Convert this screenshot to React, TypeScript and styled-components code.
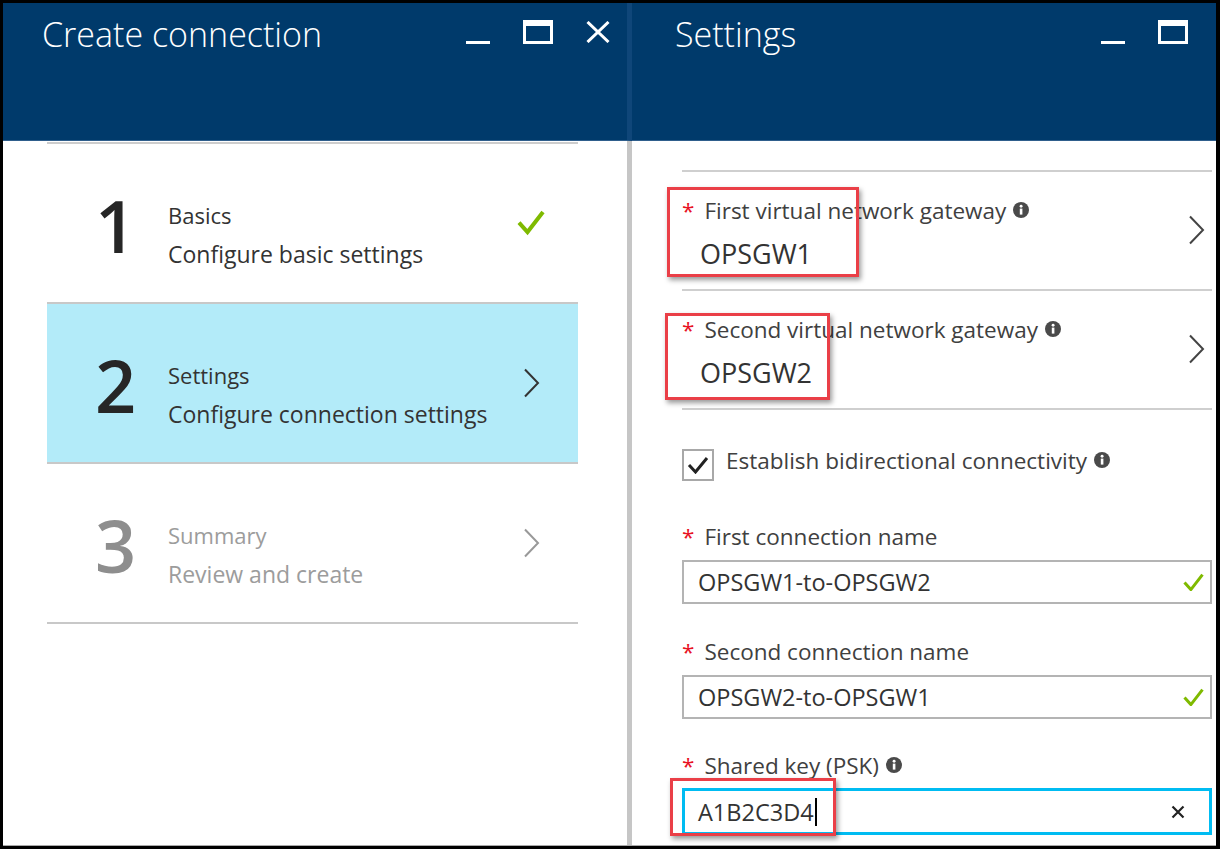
import React from "react";
import styled, { createGlobalStyle } from "styled-components";

const GlobalStyle = createGlobalStyle`
  html, body { margin: 0; padding: 0; background: #000; }
  body { font-family: "Open Sans", "Noto Sans", "Liberation Sans", sans-serif; }
  * { box-sizing: border-box; }
`;

const Frame = styled.div`
  width: 1220px;
  height: 849px;
  background: #000;
  padding: 3px 4px 3px 3px;
  display: flex;
`;

const Screen = styled.div`
  flex: 1;
  display: flex;
  background: #fff;
  border-bottom: 1px solid #a9a9a9;
  overflow: hidden;
`;

const Blade = styled.section<{ $width?: number }>`
  display: flex;
  flex-direction: column;
  ${(p) => (p.$width ? `width: ${p.$width}px; flex: none;` : "flex: 1; min-width: 0;")}
`;

const BladeHeader = styled.header<{ $divider?: boolean }>`
  height: 138px;
  flex: none;
  background: #003a6b;
  border-bottom: 1px solid #2f5e8c;
  border-right: ${(p) => (p.$divider ? "5px solid #0f4679" : "none")};
  display: flex;
  align-items: flex-start;
  color: #fff;
`;

const Title = styled.h1<{ $indent: number }>`
  margin: 10.5px 0 0 ${(p) => p.$indent}px;
  font-size: 34px;
  font-weight: 300;
  line-height: 40px;
  white-space: nowrap;
`;

const Controls = styled.div<{ $right: number }>`
  display: flex;
  align-items: flex-end;
  gap: 33px;
  height: 24px;
  margin: 17px ${(p) => p.$right}px 0 auto;
`;

const MinimizeButton = styled.span`
  width: 24px;
  height: 3px;
  background: #fff;
`;

const MaximizeButton = styled.span`
  width: 30px;
  height: 24px;
  border: 3px solid #fff;
  border-top-width: 6px;
`;

const CloseButton = styled.span`
  display: flex;
  align-self: center;
`;

const LeftBody = styled.div`
  flex: 1;
  border-right: 5px solid #c6c6c6;
  padding: 1px 49px 0 44px;
`;

const StepList = styled.div`
  border-top: 2px solid #cdcdcd;
`;

const StepRow = styled.div<{ $active?: boolean }>`
  height: 160px;
  display: flex;
  align-items: flex-start;
  padding-left: 48px;
  border-bottom: 2px solid #c8c8c8;
  background: ${(p) => (p.$active ? "#b3ebf9" : "transparent")};
`;

const StepNumber = styled.div<{ $muted?: boolean }>`
  width: 73px;
  flex: none;
  margin-top: 45px;
  font-size: 72px;
  font-weight: 600;
  line-height: 72px;
  color: ${(p) => (p.$muted ? "#8e8e8e" : "#262626")};
`;

const StepText = styled.div<{ $muted?: boolean }>`
  flex: 1;
  padding-top: 56px;
  color: ${(p) => (p.$muted ? "#9c9c9c" : "#333")};
`;

const StepTitle = styled.div`
  font-size: 22px;
  line-height: 30px;
`;

const StepSubtitle = styled.div`
  margin-top: 9px;
  font-size: 23px;
  line-height: 30px;
`;

const StepIcon = styled.div`
  width: 28px;
  flex: none;
  align-self: center;
  margin-right: 33px;
  display: flex;
  justify-content: center;
`;

const RightBody = styled.div`
  flex: 1;
  padding: 29px 4px 0 50px;
`;

const PickerList = styled.div`
  border-top: 2px solid #cfcfcf;
`;

const PickerRow = styled.div`
  position: relative;
  display: flex;
  align-items: center;
  padding: 24px 0 18px;
  border-bottom: 2px solid #cfcfcf;
`;

const PickerBody = styled.div`
  flex: 1;
`;

const FieldLabel = styled.div`
  display: flex;
  align-items: flex-start;
  font-size: 22.5px;
  line-height: 30px;
  color: #404040;
  white-space: nowrap;
`;

const Required = styled.span`
  color: #e81123;
  margin-right: 10px;
`;

const InfoIcon = styled.span`
  display: flex;
  margin: 6px 0 0 7px;
`;

const PickerValue = styled.div`
  margin-top: 11px;
  padding-left: 18px;
  font-size: 27px;
  line-height: 34px;
  color: #333;
`;

const PickerChevron = styled.span`
  display: flex;
  margin: -8px 7px 0 0;
`;

const CheckRow = styled.label`
  display: flex;
  align-items: flex-start;
  margin-top: 36px;
  font-size: 22.5px;
  line-height: 30px;
  color: #404040;
`;

const CheckBox = styled.span`
  width: 32px;
  height: 32px;
  flex: none;
  margin: 3px 12px 0 0;
  border: 2px solid #a8a8a8;
  display: flex;
  align-items: center;
  justify-content: center;
`;

const FieldGroup = styled.div<{ $gap: number }>`
  margin-top: ${(p) => p.$gap}px;
`;

const InputBox = styled.div<{ $focused?: boolean; $gap: number }>`
  position: relative;
  margin-top: ${(p) => p.$gap}px;
  height: ${(p) => (p.$focused ? 47 : 44)}px;
  border: ${(p) => (p.$focused ? "3px solid #00bcf2" : "2px solid #b4b4b4")};
  display: flex;
  align-items: center;
  padding: 0 6px 0 ${(p) => (p.$focused ? 13 : 14)}px;
  font-size: 23.5px;
  line-height: 40px;
  color: #333;
`;

const InputValue = styled.span`
  flex: 1;
  display: flex;
  align-items: center;
`;

const Caret = styled.span`
  width: 2px;
  height: 28px;
  background: #000;
  margin-left: 1px;
`;

const ClearButton = styled.span`
  display: flex;
  margin-right: 18px;
`;

const Annotation = styled.span<{ $top: number; $left: number; $w: number; $h: number }>`
  position: absolute;
  top: ${(p) => p.$top}px;
  left: ${(p) => p.$left}px;
  width: ${(p) => p.$w}px;
  height: ${(p) => p.$h}px;
  border: 3px solid #ea3f47;
  box-shadow: 2px 3px 5px rgba(0, 0, 0, 0.4);
  pointer-events: none;
`;

const CloseIcon = () => (
  <svg width="24" height="22" viewBox="0 0 24 22">
    <path d="M1.5 1 L22.5 21 M22.5 1 L1.5 21" stroke="#fff" strokeWidth="3" fill="none" />
  </svg>
);

const Chevron = ({ color = "#333" }: { color?: string }) => (
  <svg width="17" height="30" viewBox="0 0 17 30">
    <polyline points="2,1.5 15,15 2,28.5" stroke={color} strokeWidth="2" fill="none" />
  </svg>
);

const GreenCheck = ({ size = 28 }: { size?: number }) => (
  <svg width={size} height={size * 0.9} viewBox="0 0 28 25">
    <polyline points="2,12.5 10.5,22 26,2" stroke="#7fba00" strokeWidth="4" fill="none" />
  </svg>
);

const Info = () => (
  <svg width="16" height="16" viewBox="0 0 16 16">
    <circle cx="8" cy="8" r="8" fill="#4a4a4a" />
    <rect x="6.8" y="6.6" width="2.6" height="6" fill="#fff" />
    <circle cx="8.1" cy="4.2" r="1.45" fill="#fff" />
  </svg>
);

const BoxCheck = () => (
  <svg width="22" height="18" viewBox="0 0 22 18">
    <polyline points="2,9 8.5,16 20,2" stroke="#222" strokeWidth="3" fill="none" />
  </svg>
);

const ClearIcon = () => (
  <svg width="14" height="14" viewBox="0 0 14 14">
    <path d="M1.5 1.5 L12.5 12.5 M12.5 1.5 L1.5 12.5" stroke="#222" strokeWidth="2.2" fill="none" />
  </svg>
);

type Step = { n: string; title: string; sub: string; state: "done" | "active" | "todo" };

const steps: Step[] = [
  { n: "1", title: "Basics", sub: "Configure basic settings", state: "done" },
  { n: "2", title: "Settings", sub: "Configure connection settings", state: "active" },
  { n: "3", title: "Summary", sub: "Review and create", state: "todo" },
];

const pickers = [
  { label: "First virtual network gateway", value: "OPSGW1", box: { top: 14.7, left: -15.3, w: 192, h: 90.3 } },
  { label: "Second virtual network gateway", value: "OPSGW2", box: { top: 22, left: -17, w: 165, h: 87 } },
];

export default function App() {
  return (
    <>
      <GlobalStyle />
      <Frame>
        <Screen>
          <Blade $width={629}>
            <BladeHeader $divider>
              <Title $indent={39}>Create connection</Title>
              <Controls $right={17}>
                <MinimizeButton />
                <MaximizeButton />
                <CloseButton>
                  <CloseIcon />
                </CloseButton>
              </Controls>
            </BladeHeader>
            <LeftBody>
              <StepList>
                {steps.map((s) => (
                  <StepRow key={s.n} $active={s.state === "active"}>
                    <StepNumber $muted={s.state === "todo"}>{s.n}</StepNumber>
                    <StepText $muted={s.state === "todo"}>
                      <StepTitle>{s.title}</StepTitle>
                      <StepSubtitle>{s.sub}</StepSubtitle>
                    </StepText>
                    <StepIcon>
                      {s.state === "done" ? (
                        <GreenCheck />
                      ) : (
                        <Chevron color={s.state === "todo" ? "#999" : "#333"} />
                      )}
                    </StepIcon>
                  </StepRow>
                ))}
              </StepList>
            </LeftBody>
          </Blade>

          <Blade>
            <BladeHeader>
              <Title $indent={43}>Settings</Title>
              <Controls $right={28}>
                <MinimizeButton />
                <MaximizeButton />
              </Controls>
            </BladeHeader>
            <RightBody>
              <PickerList>
                {pickers.map((p) => (
                  <PickerRow key={p.value}>
                    <PickerBody>
                      <FieldLabel>
                        <Required>*</Required>
                        {p.label}
                        <InfoIcon>
                          <Info />
                        </InfoIcon>
                      </FieldLabel>
                      <PickerValue>{p.value}</PickerValue>
                    </PickerBody>
                    <PickerChevron>
                      <Chevron color="#444" />
                    </PickerChevron>
                    <Annotation $top={p.box.top} $left={p.box.left} $w={p.box.w} $h={p.box.h} />
                  </PickerRow>
                ))}
              </PickerList>

              <CheckRow>
                <CheckBox>
                  <BoxCheck />
                </CheckBox>
                Establish bidirectional connectivity
                <InfoIcon>
                  <Info />
                </InfoIcon>
              </CheckRow>

              <FieldGroup $gap={41}>
                <FieldLabel>
                  <Required>*</Required>
                  First connection name
                </FieldLabel>
                <InputBox $gap={8}>
                  <InputValue>OPSGW1-to-OPSGW2</InputValue>
                  <GreenCheck size={21} />
                </InputBox>
              </FieldGroup>

              <FieldGroup $gap={33}>
                <FieldLabel>
                  <Required>*</Required>
                  Second connection name
                </FieldLabel>
                <InputBox $gap={8}>
                  <InputValue>OPSGW2-to-OPSGW1</InputValue>
                  <GreenCheck size={21} />
                </InputBox>
              </FieldGroup>

              <FieldGroup $gap={32}>
                <FieldLabel>
                  <Required>*</Required>
                  Shared key (PSK)
                  <InfoIcon>
                    <Info />
                  </InfoIcon>
                </FieldLabel>
                <InputBox $gap={7} $focused>
                  <InputValue>
                    A1B2C3D4
                    <Caret />
                  </InputValue>
                  <ClearButton>
                    <ClearIcon />
                  </ClearButton>
                  <Annotation $top={-13} $left={-15.4} $w={166} $h={58} />
                </InputBox>
              </FieldGroup>
            </RightBody>
          </Blade>
        </Screen>
      </Frame>
    </>
  );
}
